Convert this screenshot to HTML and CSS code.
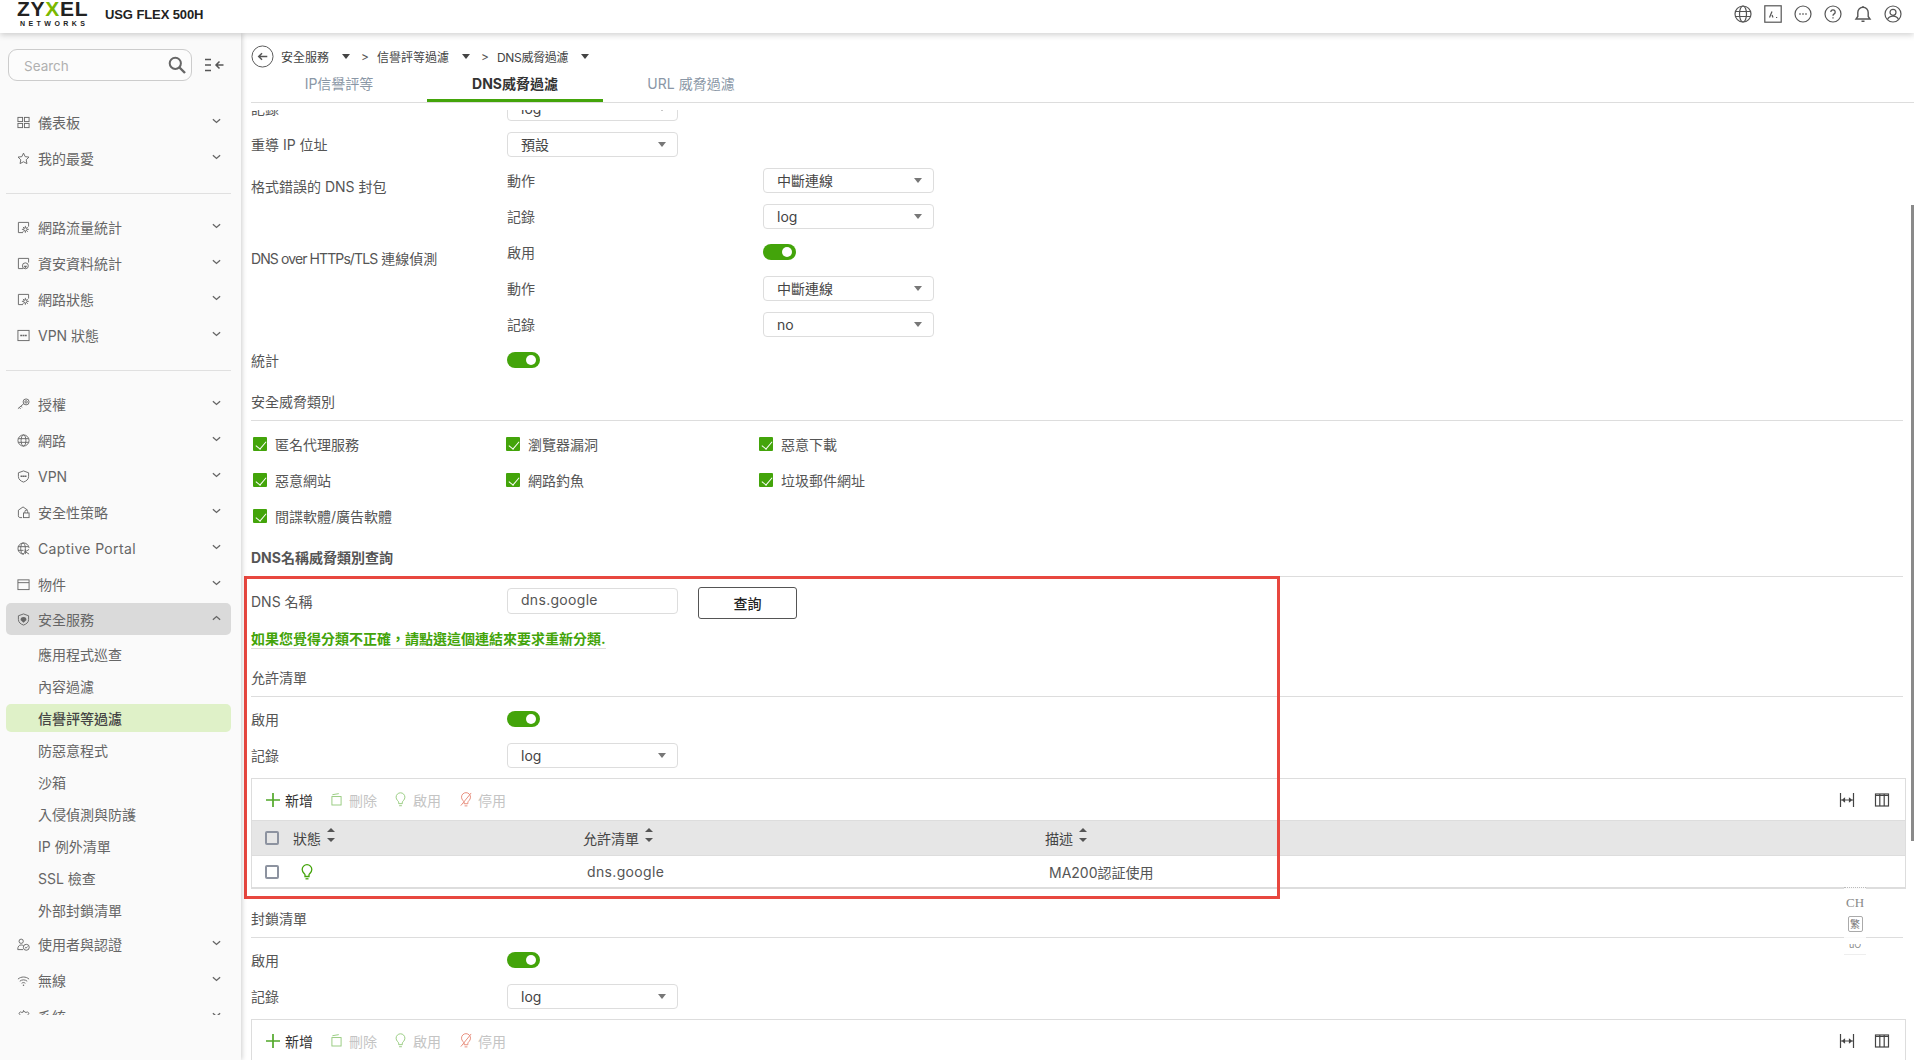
FILE: index.html
```html
<!DOCTYPE html>
<html lang="zh-Hant">
<head>
<meta charset="utf-8">
<title>USG FLEX 500H</title>
<link rel="stylesheet" href="styles.css">
</head>
<body>
<svg class="defs" width="0" height="0" aria-hidden="true">
  <symbol id="i-dash" viewBox="0 0 14 14"><rect x="1" y="1.500" width="5" height="4.500"/><rect x="8" y="1.500" width="5" height="4.500"/><rect x="1" y="8" width="5" height="4.500"/><rect x="8" y="8" width="5" height="4.500"/></symbol>
  <symbol id="i-star" viewBox="0 0 14 14"><path d="M7 1.200l1.800 3.800 4.100.5-3 2.900.8 4.100L7 10.500l-3.700 2 .8-4.100-3-2.900 4.100-.5z"/></symbol>
  <symbol id="i-chart" viewBox="0 0 14 14"><path d="M6.500 12.500h-5v-11h11V6"/><circle cx="9" cy="9" r="1.800"/><path d="M9 5.300v1.900M9 10.800v1.900M5.300 9h1.900M10.800 9h1.900M6.400 6.400l1.300 1.300M10.300 10.300l1.300 1.300M11.600 6.400l-1.300 1.300M7.700 10.300l-1.300 1.300"/></symbol>
  <symbol id="i-chart2" viewBox="0 0 14 14"><path d="M6.500 12.500h-5v-11h11V6"/><circle cx="9" cy="9.500" r="3.200"/><path class="fillc" d="M7 9.300h4L9 12z"/></symbol>
  <symbol id="i-vpnbox" viewBox="0 0 14 14"><rect x="1" y="1.500" width="12" height="11"/><path d="M3.500 7h7" stroke-width="1.600" stroke-dasharray="2 .5"/></symbol>
  <symbol id="i-key" viewBox="0 0 14 14"><circle cx="9.800" cy="4.200" r="3.200"/><circle cx="9.800" cy="4.200" r="1.300"/><path d="M7.200 6.200L1 11.500M2.600 10.200l1.300 1.500M4.300 8.800l1.100 1.300"/></symbol>
  <symbol id="i-globe" viewBox="0 0 14 14"><circle cx="7" cy="7" r="6"/><ellipse cx="7" cy="7" rx="2.600" ry="6"/><path d="M1.400 5h11.200M1.400 9h11.200"/></symbol>
  <symbol id="i-shield" viewBox="0 0 14 14"><path d="M7 1l5.500 2v4c0 3-2.400 5-5.500 6-3.100-1-5.500-3-5.500-6V3z"/><path d="M3.800 6.800h6.400" stroke-width="1.600" stroke-dasharray="2 .3"/></symbol>
  <symbol id="i-house" viewBox="0 0 14 14"><path d="M5.500 12.500H3a2 2 0 0 1-1.500-2V4.500L6.500 1l5 3.500"/><rect x="7" y="7.500" width="6" height="5"/><path d="M8.500 7.500V6a1.500 1.500 0 0 1 3 0v1.500"/></symbol>
  <symbol id="i-portal" viewBox="0 0 14 14"><path d="M7.500 13A6 6 0 1 1 13 6.500"/><ellipse cx="6.500" cy="7" rx="2.500" ry="6"/><path d="M1 5h11M1 9h6M9 8v5M13 8l-4 2.500 4 2.500"/></symbol>
  <symbol id="i-obj" viewBox="0 0 14 14"><rect x="1" y="2" width="12" height="10.500"/><path d="M1 5h12"/></symbol>
  <symbol id="i-secsvc" viewBox="0 0 14 14"><path d="M7 1l5.500 2v4c0 3-2.400 5-5.500 6-3.100-1-5.500-3-5.500-6V3z"/><path class="fillc" d="M3.800 7.500a3.200 3.200 0 0 1 6.400 0L7 10.500z"/></symbol>
  <symbol id="i-user" viewBox="0 0 14 14"><circle cx="4.500" cy="3.500" r="2.300"/><path d="M.8 12.500c0-3.500 1.500-5 3.700-5 1 0 1.800.3 2.500.9M.8 12.500h5.700"/><circle cx="10" cy="10" r="3.200"/><path d="M8.800 10l1 1 1.500-1.800"/></symbol>
  <symbol id="i-wifi" viewBox="0 0 14 14"><path d="M1 5.500c3.500-3 8.500-3 12 0M3 7.800c2.300-2 5.700-2 8 0M5 10c1.200-1 2.800-1 4 0"/><circle class="fillc" cx="7" cy="12" r=".8"/></symbol>
  <symbol id="i-gear" viewBox="0 0 14 14"><path d="M1 7l1.500-.6.5-1.600-.8-1.300 1.600-1.600 1.300.8 1.600-.5L7 .5l1.300 1.700 1.600.5 1.300-.8 1.600 1.600-.8 1.300.5 1.600L14 7"/></symbol>
  <symbol id="i-chev" viewBox="0 0 10 6"><path d="M1 1l4 3.600L9 1" stroke-width="1.500"/></symbol>
  <symbol id="i-bulb" viewBox="0 0 12 16"><path d="M4 12.500h4V10.800c0-1 2.800-2.300 2.800-5.300A4.800 4.800 0 0 0 1.200 5.500c0 3 2.800 4.300 2.800 5.300z"/><path d="M4.500 14.800h3"/></symbol>
  <symbol id="i-bulboff" viewBox="0 0 14 16"><path d="M5 12.500h4v-1.700c0-1 2.800-2.300 2.800-5.300A4.800 4.800 0 0 0 2.200 5.500c0 3 2.800 4.300 2.800 5.300z"/><path d="M1.500 14.500L12.500 1M5.500 14.800h3"/></symbol>
  <symbol id="i-trash" viewBox="0 0 12 14"><rect x="1" y="3.800" width="10" height="9.200"/><path d="M1.500 1.800l7-1.200"/></symbol>
  <symbol id="i-fit" viewBox="0 0 16 16"><path d="M1.500 1v14M14.500 1v14M2 8h12M3.500 8l2-1.500v3zM12.500 8l-2-1.500v3z"/></symbol>
  <symbol id="i-cols" viewBox="0 0 16 16"><rect x="1.500" y="2" width="13" height="12"/><path d="M1.500 3.500h13M5.800 2v12M10.200 2v12"/></symbol>
</svg>

<header class="topbar">
  <div class="logo">
    <div class="logo-main">ZY<span class="logo-x">X</span>EL</div>
    <div class="logo-sub">NETWORKS</div>
  </div>
  <div class="model">USG FLEX 500H</div>
  <div class="top-icons">
    <svg class="top-ic" viewBox="0 0 18 18"><circle cx="9" cy="9" r="8"/><ellipse cx="9" cy="9" rx="3.500" ry="8"/><path d="M1.500 6.500h15M1.500 11.500h15"/></svg>
    <svg class="top-ic" viewBox="0 0 18 18"><rect x=".8" y=".8" width="16.400" height="16.400"/><path d="M5.500 12.500L8 6.500M8 10l1 2.500"/><path d="M12 12.500h1.200"/></svg>
    <svg class="top-ic" viewBox="0 0 18 18"><circle cx="9" cy="9" r="8"/><path d="M5.300 9h1.400M8.300 9h1.400M11.300 9h1.400" stroke-width="1.400"/></svg>
    <svg class="top-ic" viewBox="0 0 18 18"><circle cx="9" cy="9" r="8"/><path d="M6.800 7a2.200 2.200 0 1 1 3.400 1.900c-.8.500-1.200.9-1.200 1.800M9 12.300v1.200" stroke-width="1.300"/></svg>
    <svg class="top-ic" viewBox="0 0 18 18"><path d="M2 14h14l-1.800-2.500V7.500a5.200 5.200 0 0 0-10.400 0v4zM7.500 16.300h3M9 1v1.300" stroke-width="1.400"/></svg>
    <svg class="top-ic" viewBox="0 0 18 18"><circle cx="9" cy="9" r="8"/><circle cx="9" cy="7.300" r="3"/><path d="M3.500 14.500c1-2.300 3-3.300 5.500-3.300s4.500 1 5.500 3.300"/></svg>
  </div>
</header>

<div class="shell">
  <aside class="sidebar">
    <div class="search-row">
      <div class="search">
        <span class="search-text">Search</span>
        <svg class="search-ic" viewBox="0 0 18 18"><circle cx="7.300" cy="7.300" r="5.600"/><path d="M11.500 11.500l5.500 5.500" stroke-width="2.400"/></svg>
      </div>
      <svg class="collapse-ic" viewBox="0 0 20 14"><path d="M1 1.500h6M1 7h6M1 12.500h6M12 7h7.500M15.500 3.500L12 7l3.500 3.500" stroke-width="1.500"/></svg>
    </div>
    <nav class="nav">
      <div class="group">
        <a class="item"><svg class="ic"><use href="#i-dash"/></svg><span class="label">儀表板</span><svg class="chev"><use href="#i-chev"/></svg></a>
        <a class="item"><svg class="ic"><use href="#i-star"/></svg><span class="label">我的最愛</span><svg class="chev"><use href="#i-chev"/></svg></a>
      </div>
      <div class="group">
        <a class="item"><svg class="ic"><use href="#i-chart"/></svg><span class="label">網路流量統計</span><svg class="chev"><use href="#i-chev"/></svg></a>
        <a class="item"><svg class="ic"><use href="#i-chart2"/></svg><span class="label">資安資料統計</span><svg class="chev"><use href="#i-chev"/></svg></a>
        <a class="item"><svg class="ic"><use href="#i-chart"/></svg><span class="label">網路狀態</span><svg class="chev"><use href="#i-chev"/></svg></a>
        <a class="item"><svg class="ic"><use href="#i-vpnbox"/></svg><span class="label">VPN 狀態</span><svg class="chev"><use href="#i-chev"/></svg></a>
      </div>
      <div class="group last">
        <a class="item"><svg class="ic"><use href="#i-key"/></svg><span class="label">授權</span><svg class="chev"><use href="#i-chev"/></svg></a>
        <a class="item"><svg class="ic"><use href="#i-globe"/></svg><span class="label">網路</span><svg class="chev"><use href="#i-chev"/></svg></a>
        <a class="item"><svg class="ic"><use href="#i-shield"/></svg><span class="label">VPN</span><svg class="chev"><use href="#i-chev"/></svg></a>
        <a class="item"><svg class="ic"><use href="#i-house"/></svg><span class="label">安全性策略</span><svg class="chev"><use href="#i-chev"/></svg></a>
        <a class="item"><svg class="ic"><use href="#i-portal"/></svg><span class="label wide">Captive Portal</span><svg class="chev"><use href="#i-chev"/></svg></a>
        <a class="item"><svg class="ic"><use href="#i-obj"/></svg><span class="label">物件</span><svg class="chev"><use href="#i-chev"/></svg></a>
        <a class="item open"><svg class="ic"><use href="#i-secsvc"/></svg><span class="label">安全服務</span><svg class="chev up"><use href="#i-chev"/></svg></a>
        <a class="sub">應用程式巡查</a>
        <a class="sub">內容過濾</a>
        <a class="sub current">信譽評等過濾</a>
        <a class="sub">防惡意程式</a>
        <a class="sub">沙箱</a>
        <a class="sub">入侵偵測與防護</a>
        <a class="sub">IP 例外清單</a>
        <a class="sub">SSL 檢查</a>
        <a class="sub">外部封鎖清單</a>
        <a class="item"><svg class="ic"><use href="#i-user"/></svg><span class="label">使用者與認證</span><svg class="chev"><use href="#i-chev"/></svg></a>
        <a class="item"><svg class="ic"><use href="#i-wifi"/></svg><span class="label">無線</span><svg class="chev"><use href="#i-chev"/></svg></a>
        <a class="item"><svg class="ic"><use href="#i-gear"/></svg><span class="label">系統</span><svg class="chev"><use href="#i-chev"/></svg></a>
      </div>
    </nav>
  </aside>

  <main class="main">
    <div class="crumbs">
      <svg class="back" viewBox="0 0 24 24"><circle cx="12" cy="12" r="11"/><path d="M17 12H8M11.500 8.500L8 12l3.500 3.500" stroke-width="1.500"/></svg>
      <span class="crumb">安全服務</span><i class="caret"></i><span class="gt">&gt;</span>
      <span class="crumb">信譽評等過濾</span><i class="caret"></i><span class="gt">&gt;</span>
      <span class="crumb tight">DNS威脅過濾</span><i class="caret"></i>
    </div>
    <div class="tabs">
      <a class="tab">IP信譽評等</a>
      <a class="tab active">DNS威脅過濾</a>
      <a class="tab">URL 威脅過濾</a>
    </div>
    <div class="viewport">
      <div class="content">
        <div class="row"><span>記錄</span><div class="select"><span>log</span></div></div>
        <div class="row"><span>重導 IP 位址</span><div class="select"><span>預設</span></div></div>
        <div class="row"><span class="low">格式錯誤的 DNS 封包</span><span>動作</span><div class="select"><span>中斷連線</span></div></div>
        <div class="row"><span></span><span>記錄</span><div class="select"><span>log</span></div></div>
        <div class="row"><span class="low"><span class="narrow">DNS over HTTPs/TLS</span> 連線偵測</span><span>啟用</span><div class="toggle"></div></div>
        <div class="row"><span></span><span>動作</span><div class="select"><span>中斷連線</span></div></div>
        <div class="row"><span></span><span>記錄</span><div class="select"><span>no</span></div></div>
        <div class="row"><span>統計</span><div class="toggle"></div></div>

        <h3 class="title">安全威脅類別</h3>
        <div class="checks">
          <label class="check"><i class="box"></i>匿名代理服務</label>
          <label class="check"><i class="box"></i>瀏覽器漏洞</label>
          <label class="check"><i class="box"></i>惡意下載</label>
          <label class="check"><i class="box"></i>惡意網站</label>
          <label class="check"><i class="box"></i>網路釣魚</label>
          <label class="check"><i class="box"></i>垃圾郵件網址</label>
          <label class="check"><i class="box"></i>間諜軟體/廣告軟體</label>
        </div>

        <h3 class="title strong">DNS名稱威脅類別查詢</h3>
        <div class="row query"><span>DNS 名稱</span><div class="input">dns.google</div><button class="btn">查詢</button></div>
        <div class="linkrow"><a class="link">如果您覺得分類不正確，請點選這個連結來要求重新分類.</a></div>

        <h3 class="title tight">允許清單</h3>
        <div class="row"><span>啟用</span><div class="toggle"></div></div>
        <div class="row"><span>記錄</span><div class="select"><span>log</span></div></div>
        <section class="table">
          <div class="toolbar">
            <a class="tool on"><svg class="t-plus" viewBox="0 0 14 14"><path d="M7 0v14M0 7h14" stroke-width="1.700"/></svg>新增</a>
            <a class="tool"><svg class="t-ic t-green"><use href="#i-trash"/></svg>刪除</a>
            <a class="tool"><svg class="t-ic t-green"><use href="#i-bulb"/></svg>啟用</a>
            <a class="tool off"><svg class="t-red"><use href="#i-bulboff"/></svg>停用</a>
            <span class="tool-right">
              <svg class="t-r"><use href="#i-fit"/></svg>
              <svg class="t-r"><use href="#i-cols"/></svg>
            </span>
          </div>
          <div class="thead">
            <div class="cell first"><i class="cb"></i>狀態<i class="sort"></i></div>
            <div class="cell">允許清單<i class="sort"></i></div>
            <div class="cell">描述<i class="sort"></i></div>
          </div>
          <div class="tbody">
            <div class="cell first"><i class="cb"></i><svg class="st-bulb"><use href="#i-bulb"/></svg></div>
            <div class="cell val wide">dns.google</div>
            <div class="cell val">MA200認証使用</div>
          </div>
        </section>

        <h3 class="title tight">封鎖清單</h3>
        <div class="row"><span>啟用</span><div class="toggle"></div></div>
        <div class="row"><span>記錄</span><div class="select"><span>log</span></div></div>
        <section class="table">
          <div class="toolbar">
            <a class="tool on"><svg class="t-plus" viewBox="0 0 14 14"><path d="M7 0v14M0 7h14" stroke-width="1.700"/></svg>新增</a>
            <a class="tool"><svg class="t-ic t-green"><use href="#i-trash"/></svg>刪除</a>
            <a class="tool"><svg class="t-ic t-green"><use href="#i-bulb"/></svg>啟用</a>
            <a class="tool off"><svg class="t-red"><use href="#i-bulboff"/></svg>停用</a>
            <span class="tool-right">
              <svg class="t-r"><use href="#i-fit"/></svg>
              <svg class="t-r"><use href="#i-cols"/></svg>
            </span>
          </div>
        </section>
        <div class="redbox"></div>
      </div>
    </div>
    <div class="scrollbar"></div>
  </main>
</div>

<div class="ime">
  <div class="ime-dots"></div>
  <div class="ime-ch">CH</div>
  <div class="ime-pad">繁</div>
  <div class="ime-bottom">uO</div>
</div>
</body>
</html>
```

FILE: styles.css
```css
* { box-sizing: border-box; }
html, body { margin: 0; height: 100%; }
body {
  font-family: Inter, "Noto Sans CJK TC", sans-serif;
  font-size: 14px;
  color: #555;
  background: #fff;
  overflow: hidden;
  display: flex;
  flex-direction: column;
}
.defs { position: absolute; }
svg { fill: none; stroke: currentColor; stroke-width: 1; }
svg .fillc { fill: currentColor; stroke: none; }

/* header */
.topbar {
  height: 33px;
  flex: none;
  display: flex;
  align-items: flex-start;
  background: #fff;
  box-shadow: 0 2px 6px rgba(0,0,0,.18);
  position: relative;
  z-index: 3;
}
.logo { margin-left: 17px; width: 88px; color: #222; font-family: "Liberation Sans", sans-serif; font-weight: 700; }
.logo-main { font-size: 21px; line-height: 17px; letter-spacing: .7px; }
.logo-x { color: #7ab800; }
.logo-sub { font-size: 7px; line-height: 8px; letter-spacing: 3.450px; margin: 3px 0 0 3px; }
.model { font: 700 13px/30px "Liberation Sans", sans-serif; color: #222; letter-spacing: -.1px; }
.top-icons { margin-left: auto; display: flex; gap: 12px; padding: 5px 12px 0 0; color: #555; }
.top-ic { width: 18px; height: 18px; stroke-width: 1.200; }

.shell { flex: 1; display: flex; min-height: 0; }

/* sidebar */
.sidebar {
  width: 241px;
  flex: none;
  background: #fafafa;
  box-shadow: 1px 0 5px rgba(0,0,0,.2);
  padding: 16px 10px 45px 6px;
  display: flex;
  flex-direction: column;
  position: relative;
  z-index: 2;
}
.search-row { display: flex; align-items: center; gap: 12px; padding-left: 2px; }
.search {
  width: 184px; height: 32px;
  border: 1px solid #ccc; border-radius: 9px;
  display: flex; align-items: center; justify-content: space-between;
  padding: 0 5px 0 15px;
  background: #fcfcfc;
}
.search-text { color: #b0b0b0; font-size: 13.500px; padding-top: 2px; }
.search-ic { width: 18px; height: 18px; color: #666; stroke-width: 2; }
.collapse-ic { width: 20px; height: 14px; color: #555; }
.nav { margin-top: 23px; flex: 1; overflow: hidden; }
.group { border-bottom: 1px solid #e0e0e0; padding-bottom: 17px; margin-bottom: 15px; width: 225px; }
.group.last { border: 0; padding: 0; margin: 0; }
.item {
  height: 36px;
  display: flex;
  align-items: center;
  padding: 0 10px 0 11px;
  color: #666;
}
.ic { width: 13px; height: 13px; flex: none; margin-right: 8px; color: #666; }
.label { flex: 1; color: #666; font-size: 14px; }
.label.wide { letter-spacing: .35px; }
.chev { width: 9px; height: 6px; color: #666; margin-top: -2px; }
.chev.up { transform: rotate(180deg); }
.item.open { background: #dadada; border-radius: 5px; height: 32px; margin: 1px 0 3px; }
.sub { display: flex; align-items: center; height: 32px; padding-left: 32px; color: #666; }
.sub.current { background: #dff1c8; border-radius: 5px; height: 28px; margin: 2px 0; color: #444; font-weight: 500; }

/* main */
.main { flex: 1; min-width: 0; position: relative; display: flex; flex-direction: column; }
.crumbs {
  height: 36px; flex: none;
  padding: 10px 0 0 10px;
  display: flex; align-items: center;
  font-size: 12px; color: #444;
}
.back { width: 23px; height: 23px; color: #555; margin-right: 7px; }
.crumb { white-space: nowrap; }
.crumb.tight { letter-spacing: -.3px; }
.caret { width: 0; height: 0; border: 4.500px solid transparent; border-top: 5px solid #444; border-bottom: 0; margin-left: 13px; }
.gt { margin: 0 8px 0 11px; color: #555; }
.tabs { height: 34px; flex: none; margin: 0 0 7px 10px; display: flex; border-bottom: 1px solid #ddd; }
.tab { width: 176px; text-align: center; line-height: 29px; color: #8a97a6; }
.tab.active { color: #333; font-weight: 700; border-bottom: 3px solid #43a40a; height: 33px; }
.viewport { flex: 1; overflow: hidden; min-height: 0; }
.content { margin-top: -20px; padding-left: 10px; padding-right: 10px; position: relative; }

.row { display: grid; grid-template-columns: 256px 256px 1fr; height: 36px; align-items: center; }
.row > .select:nth-child(2), .row > .toggle:nth-child(2) { grid-column: 2; }
.low { padding-top: 12px; white-space: nowrap; }
.narrow { letter-spacing: -.9px; }
.select {
  width: 171px; height: 25px;
  border: 1px solid #ddd; border-radius: 4px;
  display: flex; align-items: center; justify-content: space-between;
  padding: 0 11px 0 13px;
  color: #444; background: #fff;
}
.select::after { content: ""; border: 4.500px solid transparent; border-top: 5px solid #777; border-bottom: 0; }
.toggle { width: 33px; height: 16px; border-radius: 8px; background: #43a40a; position: relative; }
.toggle::after { content: ""; position: absolute; right: 4px; top: 3px; width: 10px; height: 10px; border-radius: 50%; background: #fff; }
.title {
  margin: 0 0 5px; height: 43px;
  font-size: 14px; font-weight: 400; color: #555; line-height: 1;
  padding-top: 17px;
  border-bottom: 1px solid #ddd;
  width: calc(100% - 1px);
}
.title.tight { margin-bottom: 4px; }
.title.strong { font-weight: 700; color: #555; }
.checks { display: grid; grid-template-columns: 253px 253px 253px; grid-auto-rows: 36px; align-items: center; padding-left: 2px; }
.check { display: flex; align-items: center; gap: 8px; }
.box { width: 14px; height: 14px; border-radius: 1px; background: #43a40a; position: relative; flex: none; }
.box::after {
  content: ""; position: absolute; left: 4.500px; top: 1.500px; width: 5px; height: 9px;
  border: solid #fff; border-width: 0 1.800px 1.800px 0; transform: rotate(40deg);
}
.query .input {
  width: 171px; height: 26px; border: 1px solid #ddd; border-radius: 4px;
  padding: 0 13px; line-height: 22px; color: #555; letter-spacing: .3px;
}
.query .btn {
  width: 99px; height: 32px; margin: 5px 0 0 -65px;
  font: 500 14px Inter, "Noto Sans CJK TC", sans-serif;
  color: #222; background: #fff; border: 1px solid #555; border-radius: 3px;
}
.query { grid-template-columns: 256px 256px 99px; }
.linkrow { height: 36px; padding-top: 12px; }
.link { display: inline-block; color: #43a40a; font-weight: 700; border-bottom: 1px solid #ddd; line-height: 18px; height: 19px; }

/* table */
.table { margin: 5px 0 6px; border: 1px solid #ddd; border-bottom-width: 2px; width: 1655px; background: #fff; }
.toolbar { height: 41px; display: flex; align-items: center; padding-left: 14px; }
.tool { display: flex; align-items: center; color: #c4c4c4; margin-right: 18px; gap: 7px; }
.tool.on { color: #333; gap: 5px; margin-right: 18px; }
.tool.off { gap: 5px; }
.t-plus { width: 14px; height: 14px; color: #52a82a; }
.t-ic { width: 11px; height: 15px; }
.t-red { width: 14px; height: 15px; color: #e68a78; }
.t-green { color: #93c97a; }
.tool-right { margin-left: auto; display: flex; gap: 19px; padding-right: 15px; color: #444; }
.t-r { width: 16px; height: 16px; stroke-width: 1.200; }
.thead, .tbody { display: grid; grid-template-columns: 331px 462px 1fr; align-items: center; }
.thead { height: 36px; background: #e6e6e6; border-top: 1px solid #ddd; border-bottom: 1px solid #ddd; color: #444; }
.tbody { height: 31px; }
.cell { display: flex; align-items: center; }
.cell.first { padding-left: 13px; }
.val { padding-left: 4px; color: #555; }
.val.wide { letter-spacing: .35px; }
.cb { width: 14px; height: 14px; border: 2px solid #8d93a0; border-radius: 2px; margin-right: 14px; flex: none; }
.sort { width: 8px; height: 11px; margin: -4px 0 0 6px; position: relative; flex: none; }
.sort::before, .sort::after { content: ""; position: absolute; left: 0; border: 4px solid transparent; }
.sort::before { top: -3px; border-bottom: 4.500px solid #555; border-top: 0; }
.sort::after { bottom: 0; border-top: 4.500px solid #555; border-bottom: 0; }
.st-bulb { width: 12px; height: 16px; color: #43a40a; margin-left: 8px; stroke-width: 1.300; }

/* overlays */
.redbox { position: absolute; left: 3px; top: 486px; width: 1036px; height: 323px; border: 3px solid #e8473f; pointer-events: none; }
.scrollbar { position: absolute; right: 0; top: 172px; width: 3px; height: 636px; background: #8a8a8a; }
.ime { position: absolute; left: 1844px; top: 887px; width: 22px; height: 68px; background: rgba(255,255,255,.85); border-bottom: 1px solid #eee; color: #888; text-align: center; z-index: 4; }
.ime-dots { height: 4px; border-top: 1px dotted #bbb; }
.ime-ch { font: 13px/18px "Liberation Serif", serif; margin-top: 3px; }
.ime-pad { width: 15px; height: 16px; margin: 4px auto 0; border: 1px solid #aaa; border-radius: 2px; font-size: 10px; line-height: 14px; color: #777; }
.ime-bottom { height: 6px; margin-top: 12px; font-size: 9px; line-height: 2px; overflow: hidden; }
```
